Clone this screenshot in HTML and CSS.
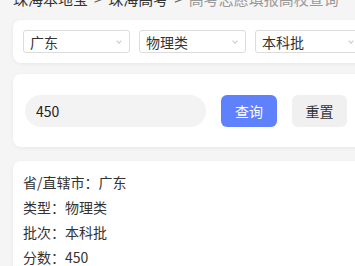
FILE: index.html
```html
<!DOCTYPE html>
<html lang="zh-CN">
<head>
    <meta charset="UTF-8">
    <meta name="viewport" content="width=device-width, initial-scale=1.0">
    <title>高考志愿填报高校查询</title>
    <link rel="stylesheet" href="styles.css">
</head>
<body>
    <div class="page">
        <div class="crumbs">
            <a href="#">珠海本地宝</a><span class="sep">&gt;</span><a href="#">珠海高考</a><span class="sep">&gt;</span><span class="current">高考志愿填报高校查询</span>
        </div>

        <div class="card filters">
            <div class="select"><span>广东</span><i class="arrow"></i></div>
            <div class="select"><span>物理类</span><i class="arrow"></i></div>
            <div class="select"><span>本科批</span><i class="arrow"></i></div>
        </div>

        <div class="card search">
            <input class="score" type="text" value="450">
            <button class="btn btn-primary">查询</button>
            <button class="btn btn-plain">重置</button>
        </div>

        <div class="card result">
            <p>省/直辖市：广东</p>
            <p>类型：物理类</p>
            <p>批次：本科批</p>
            <p>分数：450</p>
        </div>
    </div>
</body>
</html>
```

FILE: styles.css
```css
body {
    margin: 0;
    background-color: #f5f5f5;
    font-family: "Noto Sans CJK SC", "Noto Sans", sans-serif;
    color: #333;
    overflow: hidden;
}
.page {
    width: 400px;
    padding: 0 0 0 13px;
}
.crumbs {
    margin-top: -11px;
    height: 20px;
    line-height: 20px;
    font-size: 15px;
    white-space: nowrap;
}
.crumbs a {
    color: #333;
    text-decoration: none;
}
.crumbs .sep {
    margin: 0 6px;
    color: #666;
}
.crumbs .current {
    color: #999;
}
.card {
    background-color: white;
    border-radius: 8px;
    box-shadow: 0 1px 4px rgba(0,0,0,0.06);
    margin-top: 11px;
}
.filters {
    display: flex;
    gap: 9px;
    padding: 10px;
}
.select {
    box-sizing: border-box;
    width: 107px;
    height: 23px;
    border: 1px solid #dcdcdc;
    border-radius: 3px;
    display: flex;
    align-items: center;
    justify-content: space-between;
    padding: 0 6px;
    font-size: 14px;
    color: #333;
}
.arrow {
    width: 3px;
    height: 3px;
    border-right: 1px solid #c8c8c8;
    border-bottom: 1px solid #c8c8c8;
    transform: rotate(45deg);
    margin-top: -2px;
    margin-right: 2px;
}
.search {
    display: flex;
    align-items: center;
    gap: 15px;
    padding: 21px 12px 20px;
}
.score {
    box-sizing: border-box;
    width: 181px;
    height: 32px;
    border: none;
    border-radius: 16px;
    background-color: #f3f3f3;
    padding: 0 11px;
    font-family: inherit;
    font-size: 14px;
    color: #222;
    outline: none;
}
.btn {
    height: 32px;
    border: none;
    border-radius: 6px;
    font-family: inherit;
    font-size: 14px;
    padding: 0;
}
.btn-primary {
    width: 56px;
    background-color: #5f81fd;
    color: white;
}
.btn-plain {
    width: 55px;
    background-color: #f0f0f0;
    color: #333;
}
.result {
    margin-top: 14px;
    padding: 9px 10px;
}
.result p {
    margin: 0;
    font-size: 14px;
    line-height: 25px;
    color: #333;
}
```
